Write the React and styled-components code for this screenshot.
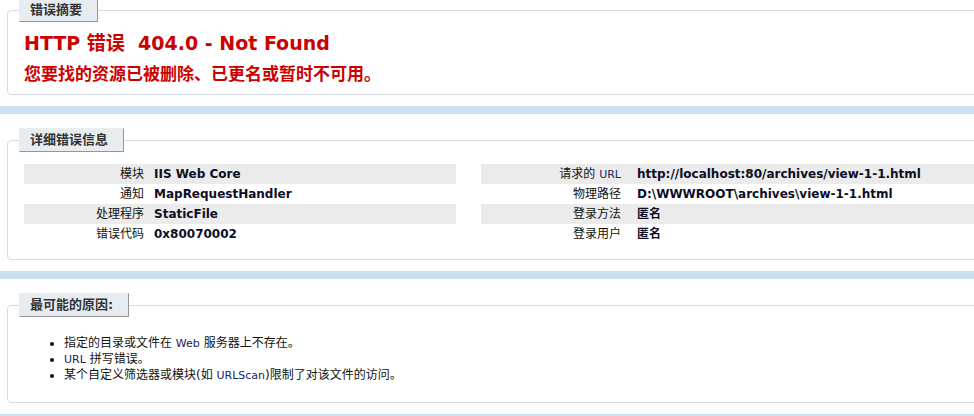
import React from "react";
import styled, { createGlobalStyle } from "styled-components";

const GlobalStyle = createGlobalStyle`
  html, body {
    margin: 0;
    overflow: hidden;
  }
  body {
    background: #cbe1ef;
    font-family: "DejaVu Sans", "Noto Sans CJK SC", sans-serif;
    font-size: 12px;
    color: #000;
  }
`;

const Page = styled.div`
  display: flex;
  flex-direction: column;
  gap: 8px;
  width: 1300px;
  margin-top: -16px;
`;

const Panel = styled.div`
  background: #fff;
  padding: 14px 0 11px 7px;
`;

const Box = styled.fieldset`
  margin: 0;
  padding: 0 15px 0 16px;
  border: 1px solid #d5dce3;
  border-radius: 4px;
  min-width: 0;
`;

const Legend = styled.legend`
  margin-left: -5px;
  padding: 3px 15px 3px 10px;
  border-top: 1px solid #ededed;
  border-left: 1px solid #ededed;
  border-right: 1px solid #969696;
  border-bottom: 1px solid #969696;
  background: #e7ecf0;
  color: #333;
  font-weight: bold;
  font-size: 13px;
  line-height: 16px;
`;

const Title = styled.h2`
  margin: 9px 0 0;
  font-size: 19px;
  line-height: 24px;
  color: #cc0000;
  font-weight: bold;
  white-space: pre;
`;

const Subtitle = styled.h3`
  margin: 8px 0 9px;
  font-size: 17px;
  line-height: 22px;
  color: #cc0000;
  font-weight: bold;
`;

const DetailsGrid = styled.div`
  display: grid;
  grid-template-columns: 432px 777px;
  column-gap: 25px;
  margin: 12px 0 15px;
`;

const Table = styled.table`
  border-collapse: collapse;
  width: 100%;
`;

const Row = styled.tr`
  background: ${(p) => (p.$alt ? "#ebebeb" : "transparent")};
`;

const Label = styled.th`
  width: ${(p) => p.$w}px;
  box-sizing: border-box;
  padding: 0 ${(p) => p.$gap}px 0 0;
  height: 20px;
  line-height: 20px;
  text-align: right;
  font-weight: normal;
  white-space: nowrap;
  color: #111;
`;

const Value = styled.td`
  padding: 0;
  height: 20px;
  line-height: 20px;
  font-weight: bold;
  font-size: 12px;
  color: #0d0d26;
  white-space: nowrap;
`;

const Latin = styled.span`
  font-size: 11px;
  line-height: 1;
  color: #222258;
`;

const Reasons = styled.ul`
  margin: 18px 0 19px;
  padding-left: 40px;
  line-height: 16px;
  color: #111;
`;

const Reason = styled.li`
  height: 16px;
`;

const leftRows = [
  ["模块", "IIS Web Core"],
  ["通知", "MapRequestHandler"],
  ["处理程序", "StaticFile"],
  ["错误代码", "0x80070002"],
];

const rightRows = [
  [
    <>
      请求的 <Latin>URL</Latin>
    </>,
    "http://localhost:80/archives/view-1-1.html",
  ],
  ["物理路径", "D:\\WWWROOT\\archives\\view-1-1.html"],
  ["登录方法", "匿名"],
  ["登录用户", "匿名"],
];

const Details = ({ rows, w, gap }) => (
  <Table>
    <tbody>
      {rows.map(([label, value], i) => (
        <Row key={i} $alt={i % 2 === 0}>
          <Label $w={w} $gap={gap}>
            {label}
          </Label>
          <Value>{value}</Value>
        </Row>
      ))}
    </tbody>
  </Table>
);

const App = () => {
  return (
    <>
      <GlobalStyle />
      <Page>
        <Panel>
          <Box>
            <Legend>错误摘要</Legend>
            <Title>{"HTTP 错误  404.0 - Not Found"}</Title>
            <Subtitle>您要找的资源已被删除、已更名或暂时不可用。</Subtitle>
          </Box>
        </Panel>
        <Panel>
          <Box>
            <Legend>详细错误信息</Legend>
            <DetailsGrid>
              <Details rows={leftRows} w={130} gap={10} />
              <Details rows={rightRows} w={156} gap={16} />
            </DetailsGrid>
          </Box>
        </Panel>
        <Panel>
          <Box>
            <Legend>最可能的原因:</Legend>
            <Reasons>
              <Reason>
                指定的目录或文件在 <Latin>Web</Latin> 服务器上不存在。
              </Reason>
              <Reason>
                <Latin>URL</Latin> 拼写错误。
              </Reason>
              <Reason>
                某个自定义筛选器或模块(如 <Latin>URLScan</Latin>)限制了对该文件的访问。
              </Reason>
            </Reasons>
          </Box>
        </Panel>
      </Page>
    </>
  );
};

export default App;
